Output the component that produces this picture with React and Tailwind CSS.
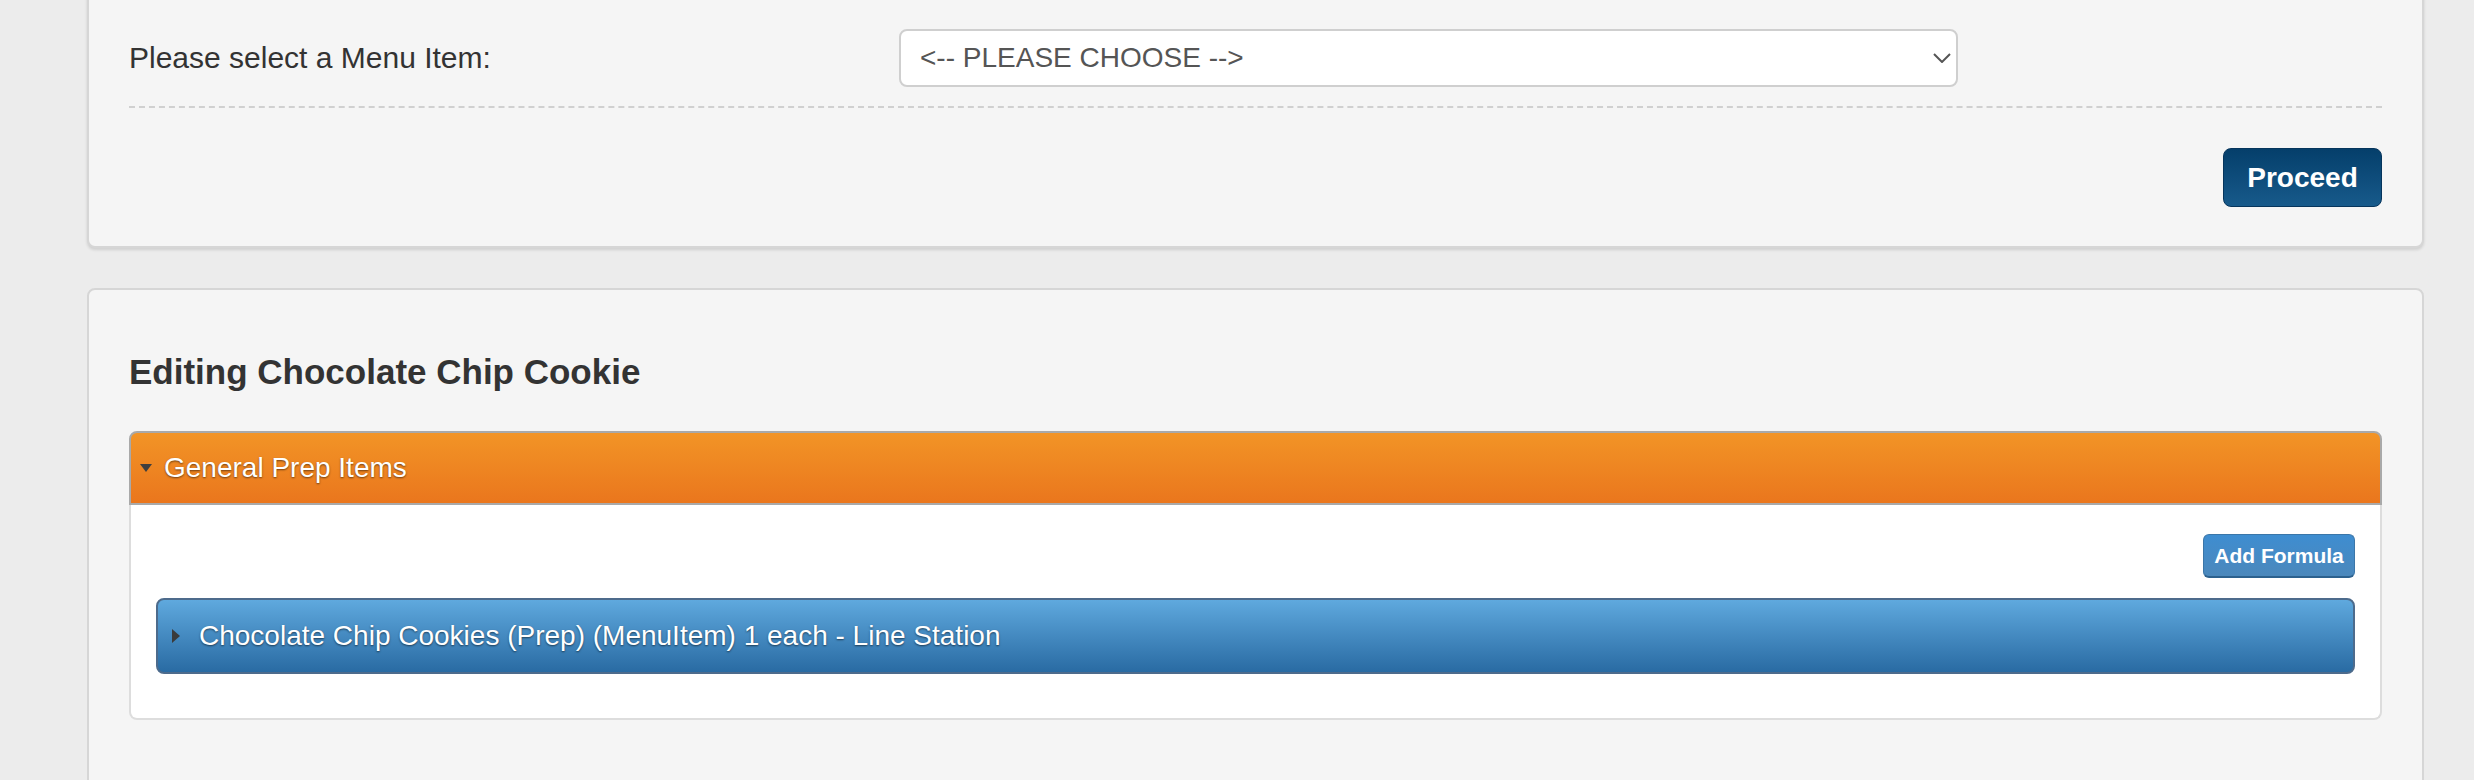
import React from "react";

const font = { fontFamily: '"Liberation Sans", Arial, sans-serif' };

const CaretDown = () => (
  <svg width="12" height="8" viewBox="0 0 12 8" className="shrink-0">
    <path d="M0 0 L12 0 L6 8 Z" fill="#3f3f3f" />
  </svg>
);

const CaretRight = () => (
  <svg width="8" height="14" viewBox="0 0 8 14" className="shrink-0">
    <path d="M0 0 L8 7 L0 14 Z" fill="#3a3a3a" />
  </svg>
);

const Chevron = () => (
  <svg width="18" height="10" viewBox="0 0 18 10" className="shrink-0">
    <path d="M1 1 L9 9 L17 1" fill="none" stroke="#555" strokeWidth="2" />
  </svg>
);

const App = () => {
  return (
    <div
      className="min-h-[780px] w-[2474px] bg-[#ececec] pl-[87px] pr-[50px] overflow-hidden text-[#333]"
      style={font}
    >
      {/* menu item chooser */}
      <div className="-mt-[19px] bg-[#f5f5f5] border-2 border-[#d6d6d6] rounded-[8px] shadow-[0_2px_3px_rgba(0,0,0,0.12)] px-[40px] pt-[46px] pb-[39px]">
        <div className="flex items-center">
          <div className="w-[770px] text-[30px] leading-[32px] text-[#333]">
            Please select a Menu Item:
          </div>
          <div className="w-[1059px] h-[58px] bg-white border-2 border-[#cfcfcf] rounded-[8px] flex items-center pl-[19px] pr-[5px]">
            <span className="flex-1 text-[28px] leading-[32px] text-[#555]">
              &lt;-- PLEASE CHOOSE --&gt;
            </span>
            <Chevron />
          </div>
        </div>
        <div className="mt-[19px] border-t-2 border-dashed border-[#d0d0d0]" />
        <div className="flex justify-end mt-[40px]">
          <button className="h-[59px] w-[159px] rounded-[8px] border border-[#06355c] bg-gradient-to-b from-[#053f6b] to-[#175a8b] text-white font-bold text-[28px] leading-[32px]">
            Proceed
          </button>
        </div>
      </div>

      {/* editing panel */}
      <div className="mt-[40px] bg-[#f5f5f5] border-2 border-[#d6d6d6] rounded-[8px] px-[40px] pt-[62px] pb-[40px]">
        <h3 className="text-[35px] leading-[40px] font-bold text-[#333]">
          Editing Chocolate Chip Cookie
        </h3>
        <div className="mt-[39px]">
          <div className="h-[74px] rounded-t-[8px] border-2 border-[#a9a9a9] bg-gradient-to-b from-[#f29426] to-[#ea761d] flex items-center pl-[9px] gap-[12px]">
            <CaretDown />
            <span className="text-white text-[28px] leading-[32px] [text-shadow:0_1px_2px_rgba(0,0,0,0.55)]">
              General Prep Items
            </span>
          </div>
          <div className="bg-white border-2 border-t-0 border-[#dddddd] rounded-b-[8px] px-[25px] pt-[29px] pb-[44px]">
            <div className="flex justify-end">
              <button className="h-[44px] w-[152px] rounded-[6px] border border-[#3b76a8] border-b-2 border-b-[#2c618e] bg-gradient-to-b from-[#3e8dd0] to-[#4b88bc] text-white font-bold text-[21px] leading-[24px]">
                Add Formula
              </button>
            </div>
            <div className="mt-[20px] h-[76px] rounded-[8px] border-2 border-[#4d6b8c] bg-gradient-to-b from-[#5fa9de] to-[#296ba3] flex items-center pl-[14px] gap-[19px]">
              <CaretRight />
              <span className="text-white text-[28px] leading-[32px] [text-shadow:0_1px_2px_rgba(0,0,0,0.55)]">
                Chocolate Chip Cookies (Prep) (MenuItem) 1 each - Line Station
              </span>
            </div>
          </div>
        </div>
        <div className="h-[60px]" />
      </div>
    </div>
  );
};

export default App;
